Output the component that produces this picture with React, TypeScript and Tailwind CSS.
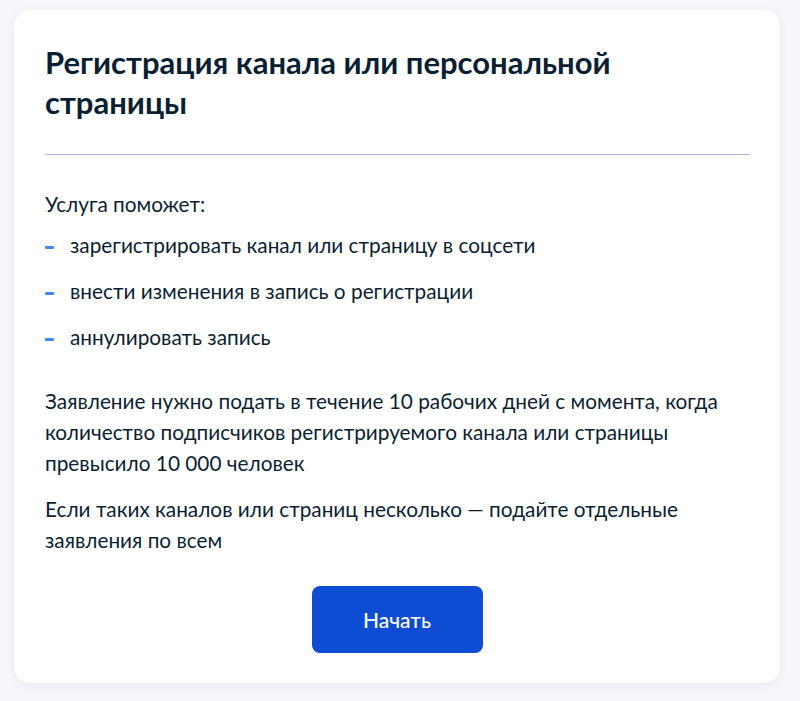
import React from "react";

const items = [
  "зарегистрировать канал или страницу в соцсети",
  "внести изменения в запись о регистрации",
  "аннулировать запись",
];

export default function App(): React.JSX.Element {
  return (
    <div className="min-h-[701px] bg-[#f4f6fb] pt-[10px] pl-[14px] pr-[20px] pb-[17px] font-['Lato','Noto_Sans',sans-serif] text-[#0b1f33]">
      <div className="flex h-[673px] flex-col rounded-[16px] bg-white px-[31px] pt-[32px] pb-[30px] shadow-[0_2px_10px_rgba(11,31,51,0.06)]">
        <h1 className="text-[31px] font-bold leading-[40px] text-[#0b1f33]">
          Регистрация канала или персональной страницы
        </h1>
        <div className="mt-[32px] h-px w-[705px] bg-[#abb8df]" />

        <p className="mt-[34px] text-[20.8px] leading-[30px]">Услуга поможет:</p>
        <ul className="mt-[11px] flex flex-col gap-[16px]">
          {items.map((item) => (
            <li key={item} className="flex items-center text-[20.8px] leading-[30px]">
              <span className="mt-[4px] mr-[16px] h-[3px] w-[9px] rounded-[1px] bg-[#3d8af0]" />
              {item}
            </li>
          ))}
        </ul>

        <p className="mt-[33px] text-[20.8px] leading-[31px]">
          Заявление нужно подать в течение 10 рабочих дней с момента, когда
          количество подписчиков регистрируемого канала или страницы
          превысило 10 000 человек
        </p>
        <p className="mt-[15px] text-[20.8px] leading-[31px]">
          Если таких каналов или страниц несколько — подайте отдельные
          заявления по всем
        </p>

        <div className="mt-auto flex justify-center">
          <button
            type="button"
            className="h-[67px] w-[171px] rounded-[8px] bg-[#0d4cd3] text-[21px] font-medium text-white"
          >
            Начать
          </button>
        </div>
      </div>
    </div>
  );
}
